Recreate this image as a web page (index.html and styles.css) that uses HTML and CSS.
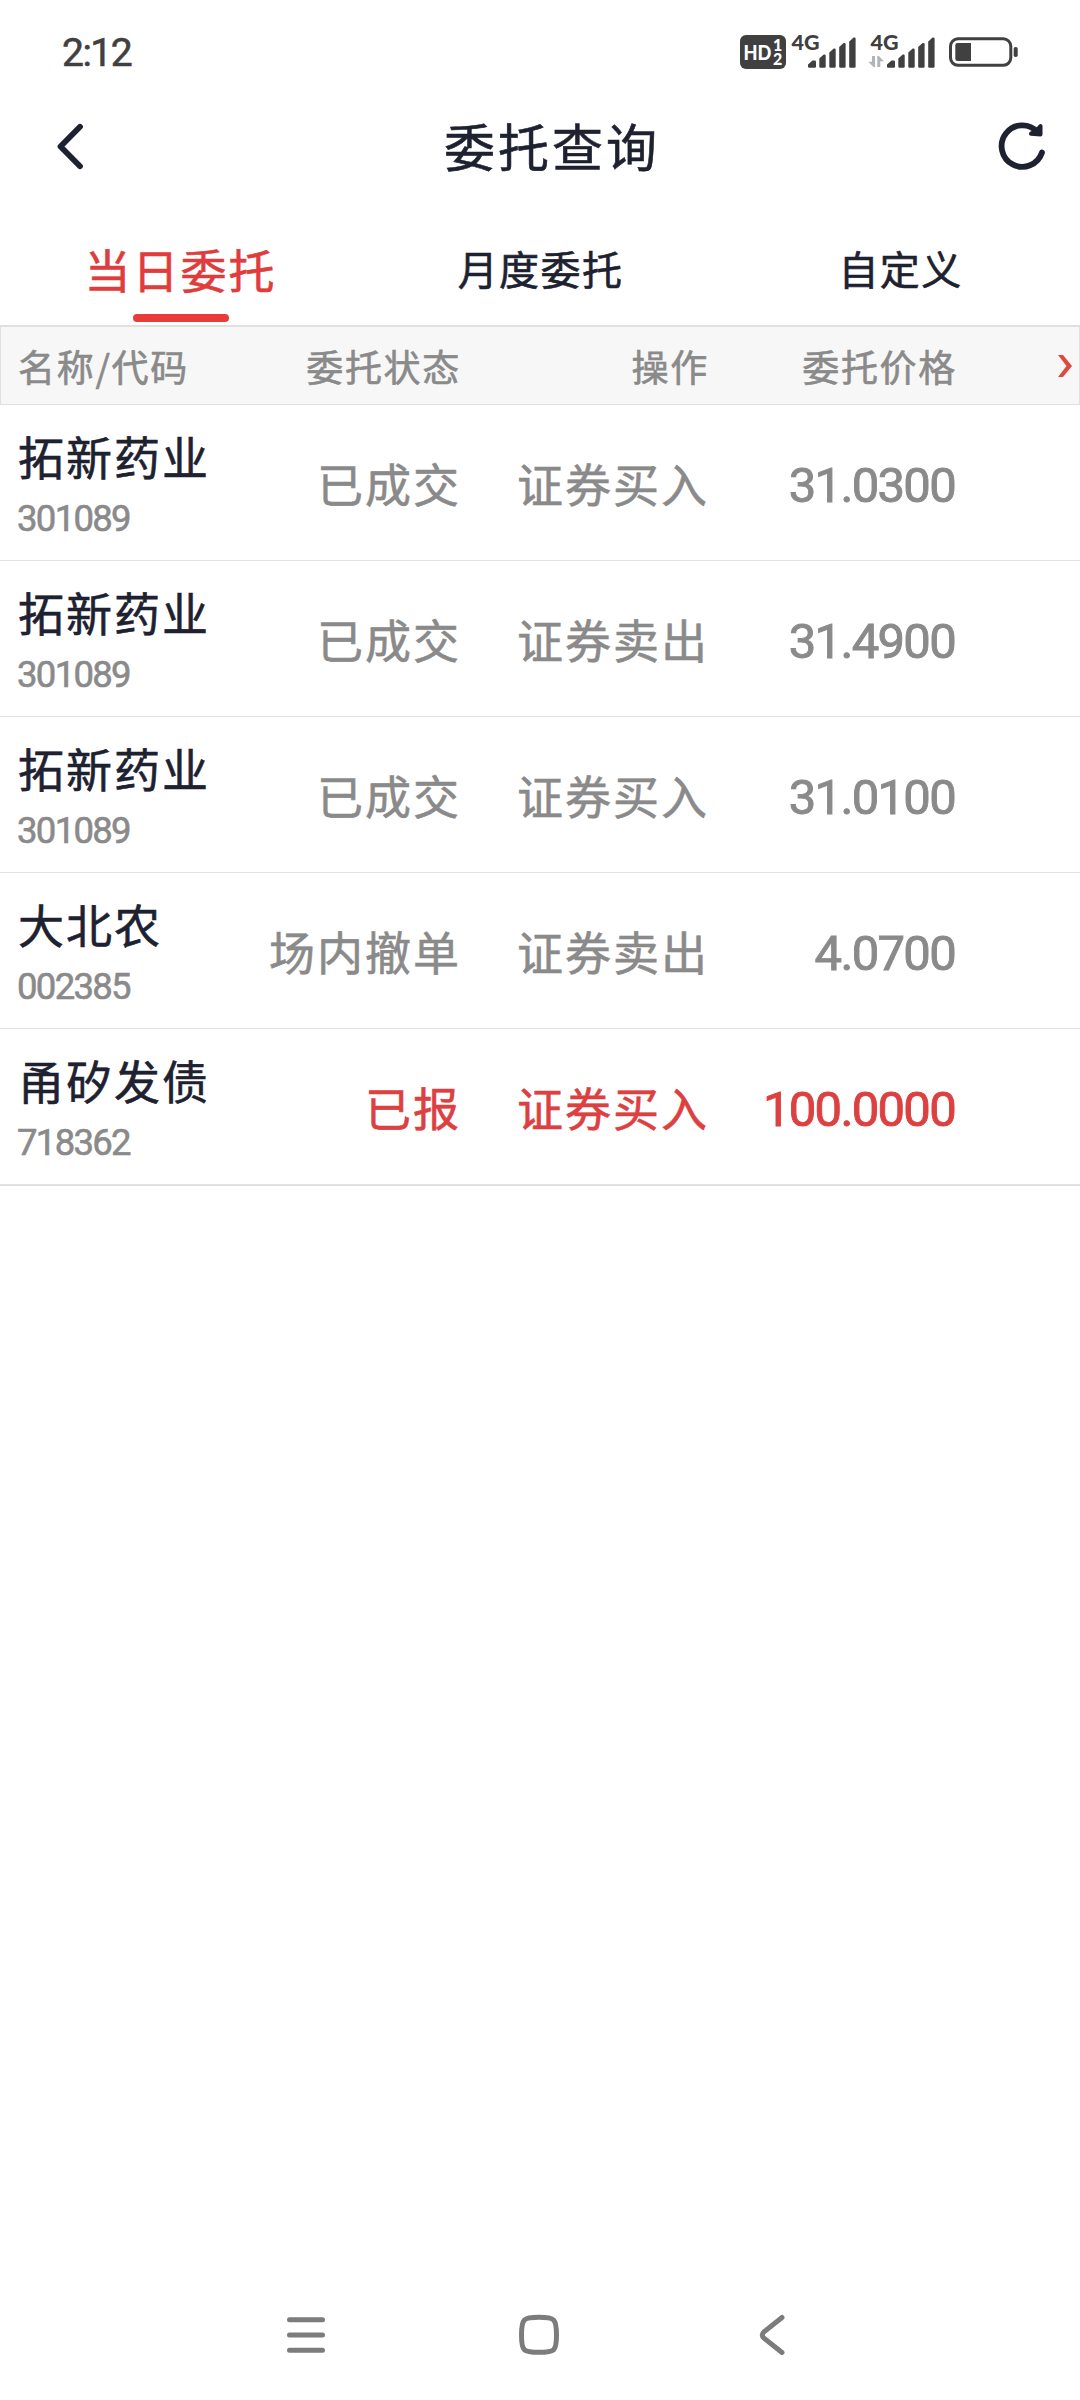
FILE: index.html
```html
<!DOCTYPE html>
<html lang="zh-CN">
<head>
    <meta charset="UTF-8">
    <meta name="viewport" content="width=device-width, initial-scale=1.0">
    <title>委托查询</title>
    <link rel="stylesheet" href="styles.css">
</head>
<body>
    <div class="status-bar">
        <span class="time">2:12</span>
        <svg class="status-icons" width="280" height="60" viewBox="740 22 280 60">
            <rect x="740" y="35" width="46" height="34" rx="6" fill="#404040"/>
            <g class="hd-text">
                <text x="743.5" y="59.5" font-size="21" textLength="28" lengthAdjust="spacingAndGlyphs">HD</text>
                <text x="773" y="51" font-size="16">1</text>
                <text x="773" y="65" font-size="16">2</text>
            </g>
            <text class="net-text" x="791.5" y="50" textLength="28" lengthAdjust="spacingAndGlyphs">4G</text>
            <text class="net-text" x="870.5" y="50" textLength="28" lengthAdjust="spacingAndGlyphs">4G</text>
            <g id="bars" fill="#404040">
                <path d="M808 64.5l4.5-4h2.2q1.3 0 1.3 1.3v4.6q0 1.4-1.3 1.4h-5.4q-1.3 0-1.3-1.4z"/>
                <path d="M819.3 58.5l4.4-4h.8q1.2 0 1.2 1.3v10.6q0 1.4-1.2 1.4h-4q-1.2 0-1.2-1.4z"/>
                <path d="M829.3 52.5l4.4-4h.8q1.2 0 1.2 1.3v16.6q0 1.4-1.2 1.4h-4q-1.2 0-1.2-1.4z"/>
                <path d="M839.2 47l4.4-4h.8q1.2 0 1.2 1.3v22.1q0 1.4-1.2 1.4h-4q-1.2 0-1.2-1.4z"/>
                <path d="M849.2 41.5l4.4-4h.8q1.2 0 1.2 1.3v27.6q0 1.4-1.2 1.4h-4q-1.2 0-1.2-1.4z"/>
            </g>
            <use href="#bars" x="79"/>
            <path d="M872 56h3v11h-1.5l-5.2-5.2h3.7zM877.3 67v-11h1.5l5.2 5.2h-3.7V67z" fill="#b3b3b3"/>
            <rect x="950.5" y="38.8" width="60.3" height="26.5" rx="7.5" fill="none" stroke="#404040" stroke-width="3"/>
            <path d="M957.5 43H971v18h-13.5q-2.2 0-2.2-2.2V45.2q0-2.2 2.2-2.2z" fill="#404040"/>
            <rect x="1013.7" y="47" width="4" height="10" rx="1.8" fill="#404040"/>
        </svg>
    </div>

    <div class="header">
        <svg class="back" width="30" height="50" viewBox="55 120 30 50">
            <path d="M80 125.8L60.5 145.5L80 165.2"/>
        </svg>
        <h1>委托查询</h1>
        <svg class="refresh" width="50" height="54" viewBox="997 119 50 54">
            <path d="M1042 152.5A20.7 20.7 0 1 1 1037.5 132"/>
            <path class="arrow" d="M1040.5 126L1040.5 134.5L1031 133.8L1037 130z"/>
        </svg>
    </div>

    <div class="tabs">
        <div class="tab active"><span>当日委托</span></div>
        <div class="tab"><span>月度委托</span></div>
        <div class="tab"><span>自定义</span></div>
    </div>

    <div class="list">
        <div class="list-head">
            <div class="name">名称/代码</div>
            <div class="state">委托状态</div>
            <div class="action">操作</div>
            <div class="price">委托价格</div>
            <svg class="more" width="16" height="22" viewBox="0 0 16 22">
                <path d="M1 0h5l9 11l-9 11H1l8.5-11z"/>
            </svg>
        </div>

        <div class="row">
            <div class="name">拓新药业<small>301089</small></div>
            <div class="state">已成交</div>
            <div class="action">证券买入</div>
            <div class="price">31.0300</div>
        </div>
        <div class="row">
            <div class="name">拓新药业<small>301089</small></div>
            <div class="state">已成交</div>
            <div class="action">证券卖出</div>
            <div class="price">31.4900</div>
        </div>
        <div class="row">
            <div class="name">拓新药业<small>301089</small></div>
            <div class="state">已成交</div>
            <div class="action">证券买入</div>
            <div class="price">31.0100</div>
        </div>
        <div class="row">
            <div class="name">大北农<small>002385</small></div>
            <div class="state">场内撤单</div>
            <div class="action">证券卖出</div>
            <div class="price">4.0700</div>
        </div>
        <div class="row pending">
            <div class="name">甬矽发债<small>718362</small></div>
            <div class="state">已报</div>
            <div class="action">证券买入</div>
            <div class="price">100.0000</div>
        </div>
    </div>

    <div class="nav-bar">
        <svg width="40" height="44" viewBox="0 0 40 44">
            <path d="M3.5 6.7h33M3.5 22h33M3.5 37.3h33"/>
        </svg>
        <svg width="44" height="44" viewBox="0 0 44 44">
            <path d="M22 4.2C37.5 4.2 39.5 5.5 39.5 22S37.5 39.3 22 39.3S4.5 38.5 4.5 22S6.5 4.2 22 4.2z"/>
        </svg>
        <svg class="nav-back" width="30" height="44" viewBox="0 0 30 44">
            <path d="M25 4.5L7 18.8Q3.5 22 7 25.2L25 39.5"/>
        </svg>
    </div>
</body>
</html>
```

FILE: styles.css
```css
* {
    box-sizing: border-box;
}
body {
    margin: 0;
    min-height: 2400px;
    display: flex;
    flex-direction: column;
    background: #fff;
    color: #1d2130;
    font-family: "Noto Sans CJK SC", sans-serif;
    -webkit-text-stroke: 0.6px currentColor;
}
svg {
    display: block;
    -webkit-text-stroke: 0;
}

/* 状态栏 */
.status-bar {
    height: 90px;
    padding: 22px 60px 0 62px;
    display: flex;
    justify-content: space-between;
}
.time {
    font-family: Roboto, sans-serif;
    font-size: 39px;
    line-height: 62px;
    letter-spacing: -1.5px;
    color: #404040;
}
.hd-text {
    font-family: Lato, sans-serif;
    font-weight: 900;
    fill: #fff;
}
.net-text {
    font-family: Lato, sans-serif;
    font-size: 21px;
    font-weight: 900;
    fill: #404040;
}

/* 标题 */
.header {
    height: 111px;
    padding: 0 33px 0 55px;
    display: flex;
    align-items: center;
    justify-content: space-between;
}
.header h1 {
    margin: 0;
    padding-left: 22px;
    font-size: 51px;
    font-weight: 400;
    line-height: 111px;
    letter-spacing: 3px;
}
.back path,
.refresh path {
    fill: none;
    stroke: #1d2130;
    stroke-width: 5.8;
    stroke-linecap: round;
    stroke-linejoin: round;
}
.refresh .arrow {
    fill: #1d2130;
    stroke-width: 4;
}

.tabs {
    height: 124px;
    display: flex;
}
.tab {
    flex: 1;
    display: flex;
    flex-direction: column;
    align-items: center;
    font-size: 40px;
    line-height: 60px;
    letter-spacing: 1.4px;
    padding: 37px 0 0 1px;
}
.tab.active {
    color: #e03c3c;
    font-size: 46px;
    letter-spacing: 2px;
}
.tab.active::after {
    content: "";
    width: 96px;
    height: 8px;
    margin-top: 16px;
    border-radius: 4px;
    background: #e93b3a;
}

/* 委托列表 */
.list {
    border-bottom: 1px solid #e0e0e0;
}
.list-head,
.row {
    display: flex;
    align-items: center;
    padding-left: 18px;
    color: #8a8a8a;
}
.list-head {
    height: 80px;
    padding-left: 17px;
    padding-right: 6px;
    font-size: 37px;
    line-height: 54px;
    letter-spacing: 1.7px;
    background: #f7f7f7;
    border: 1px solid #e0e0e0;
    border-top-width: 2px;
}
.row {
    height: 156px;
    font-size: 46px;
    letter-spacing: 2px;
    border-bottom: 1px solid #e3e3e3;
}
.name {
    width: 222px;
}
.state {
    width: 221px;
    text-align: right;
}
.action {
    width: 248px;
    text-align: right;
}
.price {
    width: 248px;
    text-align: right;
}
.row .state,
.row .action {
    padding-bottom: 2px;
}
.row .name {
    padding-top: 8px;
    color: #1d2130;
    line-height: 60px;
}
.row .name small {
    display: block;
    padding-top: 4px;
    margin-left: -1px;
    font-family: Roboto, sans-serif;
    font-size: 36.5px;
    line-height: 60px;
    letter-spacing: -1.7px;
    color: #8a8a8a;
}
.row .price {
    width: 246px;
    padding-top: 6px;
    font-family: Roboto, sans-serif;
    font-size: 49px;
    letter-spacing: -1.7px;
    -webkit-text-stroke-width: 0.9px;
}
.row.pending {
    color: #dc4040;
}
.more {
    margin-left: auto;
    fill: #dc4a40;
}

/* 底部导航 */
.nav-bar {
    margin-top: auto;
    height: 87px;
    display: flex;
    gap: 191px;
    padding-left: 286px;
}
.nav-back {
    margin-left: 5px;
}
.nav-bar path {
    fill: none;
    stroke: #7c7c7c;
    stroke-width: 5;
    stroke-linecap: round;
}
```
